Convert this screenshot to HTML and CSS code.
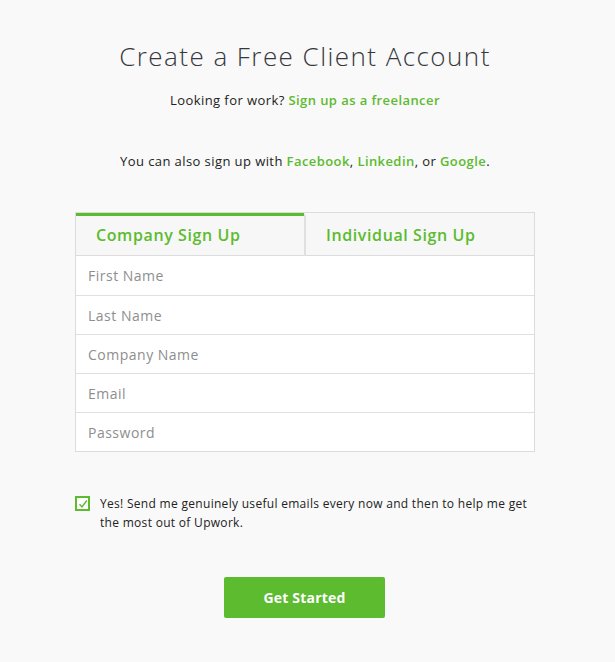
FILE: index.html
```html
<!DOCTYPE html>
<html lang="en">
<head>
  <meta charset="UTF-8">
  <meta name="viewport" content="width=device-width, initial-scale=1.0">
  <title>Create a Free Client Account</title>
  <link rel="stylesheet" href="styles.css">
</head>
<body>
  <div class="container">
    <h1>Create a Free Client Account</h1>
    <p class="freelancer">Looking for work? <a href="#">Sign up as a freelancer</a></p>
    <p class="social">You can also sign up with <a href="#">Facebook</a>, <a href="#">Linkedin</a>, or <a href="#">Google</a>.</p>

    <div class="signup-box">
      <div class="tabs">
        <div class="tab active">Company Sign Up</div>
        <div class="tab">Individual Sign Up</div>
      </div>
      <div class="fields">
        <input type="text" placeholder="First Name">
        <input type="text" placeholder="Last Name">
        <input type="text" placeholder="Company Name">
        <input type="email" placeholder="Email">
        <input type="password" placeholder="Password">
      </div>
    </div>

    <label class="optin">
      <span class="check">
        <svg width="10" height="10" viewBox="0 0 10 10"><path d="M1.5 5.2 L4 8 L8.8 1.5" fill="none" stroke="#5cbb2f" stroke-width="1.4"/></svg>
      </span>
      <span class="optin-text">Yes! Send me genuinely useful emails every now and then to help me get the most out of Upwork.</span>
    </label>

    <button type="button" class="start">Get Started</button>
  </div>
</body>
</html>
```

FILE: styles.css
```css
/* Estilos globais */
body {
  background-color: #f9f9f9;
  color: #222;
  margin: 0;
  padding: 0 5px 0 0;
  font-family: "Open Sans", Arial, sans-serif;
}
.container {
  width: 460px;
  margin: 0 auto;
  padding-top: 38px;
  text-align: center;
}
h1 {
  font-size: 26px;
  font-weight: 300;
  color: #37383c;
  margin: 0;
  line-height: 36px;
  letter-spacing: 1.45px;
}
p {
  font-size: 13px;
  margin: 0;
  letter-spacing: 0.42px;
}
a {
  color: #5cbb2f;
  font-weight: 600;
  text-decoration: none;
}
.freelancer {
  margin-top: 17px;
  line-height: 18px;
}
.social {
  margin-top: 43px;
  line-height: 18px;
}
/* Caixa de cadastro */
.signup-box {
  margin-top: 42px;
  border: 1px solid #dcdcdc;
  background: #fff;
  text-align: left;
}
.tabs {
  display: flex;
  background: #f7f7f7;
}
.tab {
  flex: 1;
  height: 39px;
  line-height: 39px;
  padding-left: 20px;
  font-size: 16px;
  font-weight: 600;
  letter-spacing: 0.6px;
  color: #5cbb2f;
  border-top: 3px solid transparent;
  border-bottom: 1px solid #dcdcdc;
}
.tab + .tab {
  border-left: 2px solid #e0e0e0;
}
.tab.active {
  border-top-color: #5cbb2f;
}
.fields input {
  display: block;
  width: 100%;
  box-sizing: border-box;
  height: 39px;
  border: none;
  border-top: 1px solid #e0e0e0;
  padding: 0 12px;
  font-family: inherit;
  font-size: 14px;
  letter-spacing: 0.5px;
  color: #222;
  background: #fff;
  outline: none;
}
.fields input:first-child {
  border-top: none;
}
.fields input::placeholder {
  color: #8e8e8e;
}
/* Opt-in */
.optin {
  display: flex;
  align-items: flex-start;
  gap: 10px;
  margin-top: 42px;
  text-align: left;
  font-size: 12px;
  line-height: 19px;
  letter-spacing: 0.3px;
  color: #222;
}
.check {
  flex: none;
  width: 11px;
  height: 11px;
  border: 2px solid #5cbb2f;
  background: #fff;
  margin-top: 2px;
  display: flex;
  align-items: center;
  justify-content: center;
}
/* Botão */
.start {
  margin-top: 45px;
  margin-left: -1px;
  width: 161px;
  height: 41px;
  background-color: #5cbb2f;
  color: #fff;
  border: none;
  border-radius: 2px;
  font-family: inherit;
  font-size: 14px;
  font-weight: 700;
  letter-spacing: 0.2px;
  cursor: pointer;
}
```
